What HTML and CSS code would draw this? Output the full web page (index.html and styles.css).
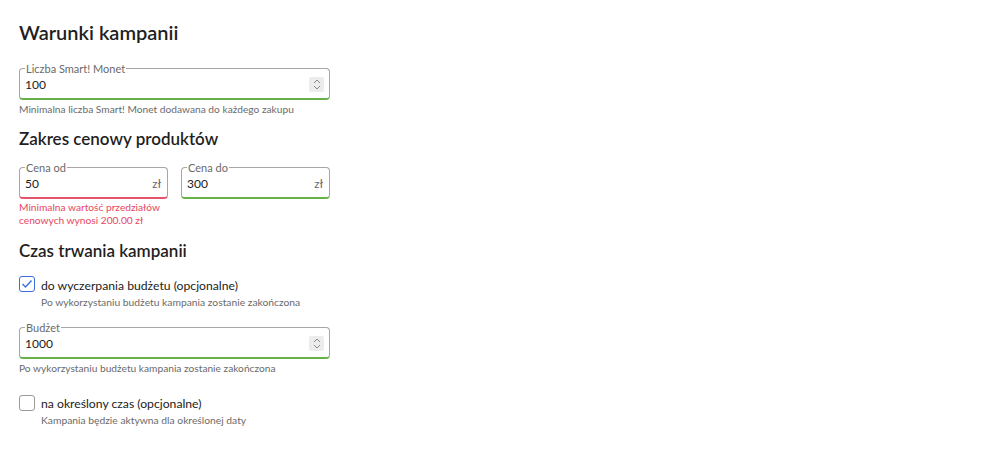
FILE: index.html
```html
<!DOCTYPE html>
<html lang="pl">
<head>
<meta charset="utf-8">
<link rel="stylesheet" href="styles.css">
</head>
<body>
<main class="page">
  <h1 class="title">Warunki kampanii</h1>

  <fieldset class="field field--ok field--wide">
    <legend class="field-label">Liczba Smart! Monet</legend>
    <div class="field-row">
      <span class="field-value">100</span>
      <span class="spinner"><svg width="8" height="11" viewBox="0 0 8 11"><path d="M1 4 L4 1 L7 4 M1 7 L4 10 L7 7" fill="none" stroke="#8a8a8a" stroke-width="1"/></svg></span>
    </div>
  </fieldset>
  <p class="helper">Minimalna liczba Smart! Monet dodawana do każdego zakupu</p>

  <h2 class="subtitle">Zakres cenowy produktów</h2>
  <div class="price-row">
    <div class="price-col">
      <fieldset class="field field--error">
        <legend class="field-label">Cena od</legend>
        <div class="field-row">
          <span class="field-value">50</span>
          <span class="unit">zł</span>
        </div>
      </fieldset>
      <p class="error">Minimalna wartość przedziałów cenowych wynosi 200.00 zł</p>
    </div>
    <div class="price-col">
      <fieldset class="field field--ok">
        <legend class="field-label">Cena do</legend>
        <div class="field-row">
          <span class="field-value">300</span>
          <span class="unit">zł</span>
        </div>
      </fieldset>
    </div>
  </div>

  <h2 class="subtitle subtitle--third">Czas trwania kampanii</h2>

  <div class="check">
    <span class="box box--checked"><svg width="12" height="10" viewBox="0 0 12 10"><path d="M1.5 5 L4.5 8 L10.5 1.5" fill="none" stroke="#3b6de0" stroke-width="1.4"/></svg></span>
    <div class="check-text">
      <div class="check-label">do wyczerpania budżetu (opcjonalne)</div>
      <div class="check-sub">Po wykorzystaniu budżetu kampania zostanie zakończona</div>
    </div>
  </div>

  <fieldset class="field field--ok field--wide field--budget">
    <legend class="field-label">Budżet</legend>
    <div class="field-row">
      <span class="field-value">1000</span>
      <span class="spinner"><svg width="8" height="11" viewBox="0 0 8 11"><path d="M1 4 L4 1 L7 4 M1 7 L4 10 L7 7" fill="none" stroke="#8a8a8a" stroke-width="1"/></svg></span>
    </div>
  </fieldset>
  <p class="helper">Po wykorzystaniu budżetu kampania zostanie zakończona</p>

  <div class="check check--second">
    <span class="box"></span>
    <div class="check-text">
      <div class="check-label">na określony czas (opcjonalne)</div>
      <div class="check-sub">Kampania będzie aktywna dla określonej daty</div>
    </div>
  </div>
</main>
</body>
</html>
```

FILE: styles.css
```css
* { box-sizing: border-box; }
html, body { margin: 0; padding: 0; background: #fff; }
body {
  font-family: Lato, "Open Sans", sans-serif;
  color: #222;
}
.page {
  padding: 19px 19px 0 19px;
  width: 331px;
  box-sizing: content-box;
}
.title {
  font-family: Lato, "Noto Sans", sans-serif;
  font-size: 20px;
  font-weight: 600;
  line-height: 26px;
  margin: 0 0 17px 0;
  color: #1f1f1f;
}
.subtitle {
  font-family: Lato, "Noto Sans", sans-serif;
  font-size: 17px;
  font-weight: 600;
  line-height: 22px;
  margin: 12px 0 11px 0;
  color: #1f1f1f;
}
.subtitle--third { margin-top: 13px; margin-bottom: 14px; }

.field {
  margin: 0;
  padding: 0 5px;
  border: 1px solid #a6a6a6;
  border-radius: 4px;
  min-width: 0;
  height: 38px;
}
.field--wide { width: 311px; }
.field--ok { border-bottom: 2px solid #69b04a; }
.field--error { border-bottom: 2px solid #e4546b; }
.field-label {
  font-size: 11px;
  line-height: 13px;
  color: #6a6a6a;
  padding: 0 1px;
}
.field-row {
  display: flex;
  align-items: center;
  height: 19px;
}
.field-value {
  flex: 1;
  font-size: 12px;
  color: #222;
}
.spinner {
  width: 15px;
  height: 15px;
  background: #ececec;
  border-radius: 2px;
  display: flex;
  align-items: center;
  justify-content: center;
}
.unit {
  font-size: 11.5px;
  color: #666;
  margin-right: 1px;
}
.helper {
  margin: 3px 0 0 0;
  font-size: 10.2px;
  line-height: 13px;
  color: #6b6b6b;
}
.price-row {
  display: flex;
  gap: 13px;
}
.price-col { width: 149px; }
.error {
  margin: 2px 0 0 0;
  font-size: 10.2px;
  line-height: 13px;
  color: #e8455e;
}
.check {
  display: flex;
  gap: 6px;
  align-items: flex-start;
}
.box {
  width: 16px;
  height: 16px;
  border: 1px solid #9a9a9a;
  border-radius: 3px;
  display: flex;
  align-items: center;
  justify-content: center;
  flex-shrink: 0;
}
.box--checked { border: 1.5px solid #3b6de0; }
.check-label {
  font-size: 12.2px;
  line-height: 17px;
  color: #222;
  margin-top: 0.5px;
}
.check-sub {
  margin-top: 2px;
  font-size: 10.3px;
  line-height: 13px;
  color: #6b6b6b;
}
.field--budget { margin-top: 12px; }
.check--second { margin-top: 20px; }
```
